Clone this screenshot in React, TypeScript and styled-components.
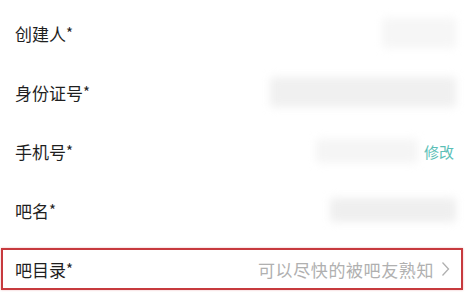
import { FC } from 'react';
import styled, { createGlobalStyle } from 'styled-components';

const GlobalStyle = createGlobalStyle`
  html, body {
    margin: 0;
    padding: 0;
    background: #ffffff;
  }
  body {
    font-family: 'Noto Sans CJK SC', 'Noto Sans', sans-serif;
  }
`;

const FormList = styled.div`
  display: flex;
  flex-direction: column;
  gap: 17px;
  width: 473px;
  height: 305px;
  box-sizing: border-box;
  padding: 12px 10px 0 1px;
  background: #ffffff;
`;

const Row = styled.div<{ highlighted?: boolean }>`
  display: flex;
  align-items: center;
  justify-content: space-between;
  height: 42px;
  box-sizing: border-box;
  padding: 0 ${({ highlighted }) => (highlighted ? 11 : 5)}px 0 12px;
  border: 2px solid ${({ highlighted }) => (highlighted ? '#c73a3e' : 'transparent')};
  ${({ highlighted }) => highlighted && 'box-shadow: 0 0 2px rgba(199, 58, 62, 0.35);'}
`;

const Label = styled.span`
  font-size: 17px;
  color: #1f1f1f;
  line-height: 1;
`;

const Star = styled.span`
  font-size: 15px;
  vertical-align: 2px;
`;

const RightSide = styled.div<{ gap?: number }>`
  display: flex;
  align-items: center;
  gap: ${({ gap }) => gap ?? 6}px;
`;

const Blurred = styled.div<{ w: number; h: number; tone?: string }>`
  width: ${({ w }) => w}px;
  height: ${({ h }) => h}px;
  background: ${({ tone }) => tone || '#f2f2f2'};
  filter: blur(4px);
  border-radius: 4px;
`;

const EditLink = styled.span`
  font-size: 15px;
  color: #5cbfb7;
  line-height: 1;
  margin-right: 2px;
`;

const Hint = styled.span`
  font-size: 17px;
  letter-spacing: 0.6px;
  color: #b0b0b0;
  line-height: 1;
`;

const Chevron: FC = () => (
  <svg width="9" height="16" viewBox="0 0 9 16">
    <polyline points="1.5,1.5 7.5,8 1.5,14.5" fill="none" stroke="#b0b0b0" strokeWidth="1.3" />
  </svg>
);

const App: FC = () => (
  <>
    <GlobalStyle />
    <FormList>
      <Row>
        <Label>
          创建人<Star>*</Star>
        </Label>
        <Blurred w={74} h={30} tone="#f6f6f6" />
      </Row>
      <Row>
        <Label>
          身份证号<Star>*</Star>
        </Label>
        <Blurred w={186} h={30} tone="#f0f0f0" />
      </Row>
      <Row>
        <Label>
          手机号<Star>*</Star>
        </Label>
        <RightSide>
          <Blurred w={102} h={24} tone="#f5f5f5" />
          <EditLink>修改</EditLink>
        </RightSide>
      </Row>
      <Row>
        <Label>
          吧名<Star>*</Star>
        </Label>
        <Blurred w={126} h={24} tone="#efefef" />
      </Row>
      <Row highlighted>
        <Label>
          吧目录<Star>*</Star>
        </Label>
        <RightSide gap={7}>
          <Hint>可以尽快的被吧友熟知</Hint>
          <Chevron />
        </RightSide>
      </Row>
    </FormList>
  </>
);

export default App;
